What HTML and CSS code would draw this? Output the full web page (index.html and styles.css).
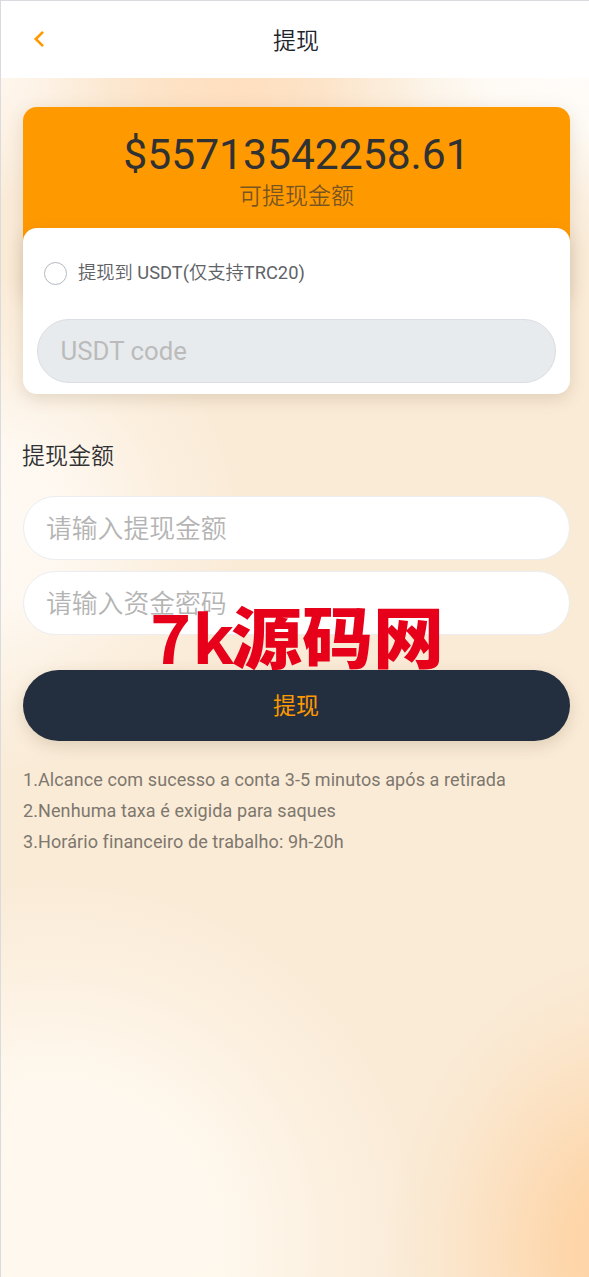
FILE: index.html
```html
<!DOCTYPE html>
<html lang="zh-CN">
<head>
<meta charset="utf-8">
<title>提现</title>
<link rel="stylesheet" href="styles.css">
</head>
<body>
<div class="page">
  <header class="header">
    <svg class="back" viewBox="0 0 12 18" aria-label="返回"><path d="M10 1.8 2.8 9l7.2 7.2" fill="none" stroke="#ff9900" stroke-width="2.6"/></svg>
    <h1 class="title">提现</h1>
  </header>
  <main class="content">
    <section class="balance">
      <div class="amount">$55713542258.61</div>
      <div class="caption">可提现金额</div>
    </section>
    <section class="method">
      <label class="option"><span class="radio"></span><span class="option-text">提现到 <span class="en">USDT(</span>仅支持<span class="en">TRC20)</span></span></label>
      <div class="field code">USDT code</div>
    </section>
    <h2 class="section-title">提现金额</h2>
    <div class="form">
      <div class="field">请输入提现金额</div>
      <div class="field">请输入资金密码</div>
    </div>
    <button class="submit">提现</button>
    <div class="notes">
      <p>1.Alcance com sucesso a conta 3-5 minutos após a retirada</p>
      <p>2.Nenhuma taxa é exigida para saques</p>
      <p>3.Horário financeiro de trabalho: 9h-20h</p>
    </div>
  </main>
  <div class="watermark"><span class="seven">7k</span><span>源码网</span></div>
</div>
</body>
</html>
```
FILE: styles.css
```css
* { box-sizing: border-box; }
body { margin: 0; font-family: Roboto, "Noto Sans CJK SC", sans-serif; color: #303133; }
h1, h2, p { margin: 0; font-weight: 400; }
.page {
  position: relative;
  height: 1277px;
  overflow: hidden;
  border-top: 1px solid #d9dbdf;
  border-left: 1px solid #d9dbdf;
  background:
    radial-gradient(ellipse 190px 140px at 235px 85px, #ffdfbf 0%, #ffdfbfcc 30%, #ffdfbf40 70%, #ffdfbf00 100%),
    radial-gradient(ellipse 260px 180px at 575px 65px, #fffdfa 0%, #fffdfad8 35%, #fffdfa50 70%, #fffdfa00 100%),
    radial-gradient(ellipse 270px 250px at -30px 525px, #fffaf4 0%, #fffaf4e0 35%, #fffaf440 75%, #fffaf400 100%),
    radial-gradient(ellipse 130px 130px at -10px 75px, #fff7ef 0%, #fff7ef00 100%),
    radial-gradient(ellipse 240px 300px at 625px 1250px, #fed2a2 0%, #fed2a2d8 25%, #fed2a280 50%, #fed2a228 78%, #fed2a200 100%),
    radial-gradient(ellipse 370px 360px at 50px 1240px, #fff8ee 0%, #fff8eef0 48%, #fff8ee60 76%, #fff8ee00 100%),
    #faebd7;
}
.header { display: grid; grid-template-columns: 62px 1fr 60px; align-items: center; height: 77px; background: #fff; }
.back { width: 12px; height: 18px; margin: -2px 0 0 32px; }
.title { padding-top: 4px; text-align: center; font-size: 23px; line-height: 34px; font-weight: 350; color: #20252c; }
.content { padding: 28.5px 19px 0 22px; }
.balance {
  height: 192px;
  padding-top: 20px;
  border-radius: 14px;
  background: #ff9900;
  text-align: center;
  box-shadow: 0 4px 18px rgba(100, 75, 40, .15);
}
.amount { font-size: 42.6px; line-height: 54px; }
.caption { padding-top: 2px; font-size: 23px; line-height: 28px; font-weight: 350; color: #303133a8; }
.method {
  position: relative;
  height: 166px;
  margin-top: -70.5px;
  padding: 30px 14px 0;
  border-radius: 14px;
  background: #fff;
  box-shadow: 0 5px 16px rgba(100, 75, 40, .17);
}
.option { display: flex; align-items: center; height: 30px; padding-left: 7px; gap: 11px; font-size: 18.3px; color: #606266; }
.radio { width: 23px; height: 23px; border: 1px solid #b4b8bf; border-radius: 50%; }
.option-text { padding-bottom: 4px; font-weight: 350; }
.en { font-weight: 400; }
.field {
  height: 64px;
  padding: 1px 22px 0;
  border: 1px solid #ebedf0;
  border-radius: 32px;
  background: #fff;
  font-size: 25.8px;
  font-weight: 350;
  line-height: 62px;
  color: #b4b4b4;
}
.code { margin-top: 31px; padding: 0 22.5px; border-color: #dadde1; background: #e7ebee; font-weight: 400; color: #bbb; }
.section-title { margin: 46px 0 0 -1px; font-size: 23px; line-height: 34px; font-weight: 350; }
.form { display: grid; gap: 11px; margin-top: 22px; }
.submit {
  display: block;
  width: 100%;
  height: 71px;
  margin-top: 35px;
  padding: 0 1px 3px 0;
  border: 0;
  border-radius: 36px;
  background: #232f3e;
  color: #ff9900;
  font: inherit;
  font-size: 23px;
  box-shadow: 0 5px 16px rgba(100, 75, 40, .18);
}
.notes { margin-top: 23px; font-size: 18px; letter-spacing: .09px; line-height: 31px; color: #7e776e; }
.watermark {
  position: absolute;
  left: 149px;
  top: 583px;
  display: flex;
  color: #e60019;
  font-family: "Noto Sans CJK SC", sans-serif;
  font-weight: 900;
  font-size: 71px;
  line-height: 100px;
  white-space: nowrap;
  transform: scaleY(.94);
}
.seven { width: 81px; padding-top: 2px; letter-spacing: 1px; font-size: 70px; font-weight: 700; }
```
